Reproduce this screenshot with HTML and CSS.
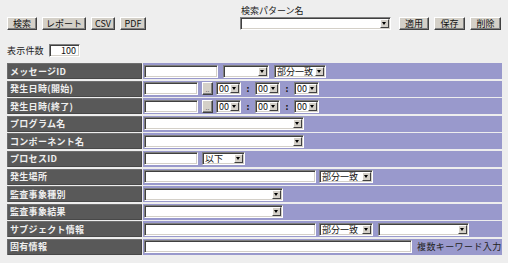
FILE: index.html
```html
<!DOCTYPE html>
<html lang="ja">
<head>
<meta charset="utf-8">
<title>検索</title>
<link rel="stylesheet" href="styles.css">
</head>
<body>
<div class="page">
  <div class="top">
    <div class="top-left">
      <div class="btn-row">
        <span class="btn w30">検索</span>
        <span class="btn w44">レポート</span>
        <span class="btn w24">CSV</span>
        <span class="btn w26">PDF</span>
      </div>
      <div class="count-row">
        <span class="count-label">表示件数</span>
        <span class="inp count-inp">100</span>
      </div>
    </div>
    <div class="top-right">
      <div class="pattern-label">検索パターン名</div>
      <div class="pattern-row">
        <span class="sel w151"><span class="sel-text"></span><span class="arrow"></span></span>
        <div class="right-btns">
          <span class="btn w30">適用</span>
          <span class="btn w31">保存</span>
          <span class="btn w31">削除</span>
        </div>
      </div>
    </div>
  </div>

  <div class="grid">
    <div class="lbl">メッセージID</div>
    <div class="val">
      <span class="inp w74"></span>
      <span class="sel w46 ml5"><span class="sel-text"></span><span class="arrow"></span></span>
      <span class="sel w52 ml5"><span class="sel-text">部分一致</span><span class="arrow"></span></span>
    </div>

    <div class="lbl">発生日時(開始)</div>
    <div class="val">
      <span class="inp w54"></span>
      <span class="btn dots ml4">..</span>
      <span class="sel w25 ml3"><span class="sel-text">00</span><span class="arrow"></span></span>
      <span class="colon">:</span>
      <span class="sel w25"><span class="sel-text">00</span><span class="arrow"></span></span>
      <span class="colon">:</span>
      <span class="sel w25"><span class="sel-text">00</span><span class="arrow"></span></span>
    </div>

    <div class="lbl">発生日時(終了)</div>
    <div class="val">
      <span class="inp w54"></span>
      <span class="btn dots ml4">..</span>
      <span class="sel w25 ml3"><span class="sel-text">00</span><span class="arrow"></span></span>
      <span class="colon">:</span>
      <span class="sel w25"><span class="sel-text">00</span><span class="arrow"></span></span>
      <span class="colon">:</span>
      <span class="sel w25"><span class="sel-text">00</span><span class="arrow"></span></span>
    </div>

    <div class="lbl">プログラム名</div>
    <div class="val">
      <span class="sel w160"><span class="sel-text"></span><span class="arrow"></span></span>
    </div>

    <div class="lbl">コンポーネント名</div>
    <div class="val">
      <span class="sel w160"><span class="sel-text"></span><span class="arrow"></span></span>
    </div>

    <div class="lbl">プロセスID</div>
    <div class="val">
      <span class="inp w54"></span>
      <span class="sel w43 ml4"><span class="sel-text">以下</span><span class="arrow"></span></span>
    </div>

    <div class="lbl">発生場所</div>
    <div class="val">
      <span class="inp w172"></span>
      <span class="sel w54 ml3"><span class="sel-text">部分一致</span><span class="arrow"></span></span>
    </div>

    <div class="lbl">監査事象種別</div>
    <div class="val">
      <span class="sel w139"><span class="sel-text"></span><span class="arrow"></span></span>
    </div>

    <div class="lbl">監査事象結果</div>
    <div class="val">
      <span class="sel w139"><span class="sel-text"></span><span class="arrow"></span></span>
    </div>

    <div class="lbl">サブジェクト情報</div>
    <div class="val">
      <span class="inp w172"></span>
      <span class="sel w54 ml3"><span class="sel-text">部分一致</span><span class="arrow"></span></span>
      <span class="sel w91 ml5"><span class="sel-text"></span><span class="arrow"></span></span>
    </div>

    <div class="lbl">固有情報</div>
    <div class="val">
      <span class="inp w268"></span>
      <span class="hint">複数キーワード入力</span>
    </div>
  </div>
</div>
</body>
</html>
```

FILE: styles.css
```css
* { box-sizing: border-box; }

body {
  margin: 0;
  background: #eeeeee;
  font-family: "Noto Sans CJK JP", "Noto Sans", sans-serif;
  font-size: 9px;
  color: #222;
}

.page {
  padding: 6px 7px 0 7px;
  width: 508px;
}

.top {
  display: flex;
  height: 57px;
}

.top-left {
  width: 234px;
  padding-top: 11px;
}

.btn-row {
  display: flex;
  gap: 5px;
  height: 13px;
}

.count-row {
  display: flex;
  align-items: center;
  margin-top: 14px;
  height: 12px;
}

.count-label {
  width: 42px;
  letter-spacing: 0.2px;
}

.count-inp {
  width: 31px;
  justify-content: flex-end;
  padding-right: 3px;
}

.top-right {
  display: flex;
  flex-direction: column;
}

.pattern-label {
  height: 11px;
  line-height: 10px;
  padding-left: 1px;
}

.pattern-row {
  display: flex;
  align-items: center;
  height: 13px;
}

.right-btns {
  display: flex;
  gap: 5px;
  margin-left: 8px;
}

.btn {
  display: inline-flex;
  align-items: center;
  justify-content: center;
  height: 13px;
  background: #d4d0c8;
  border: 1px solid;
  border-color: #ffffff #404040 #404040 #ffffff;
  box-shadow: inset -1px -1px 0 #808080;
  color: #111;
  font-size: 9px;
  line-height: 1;
}

.w24 { width: 24px; }
.w25 { width: 25px; }
.w26 { width: 26px; }
.w30 { width: 30px; }
.w31 { width: 31px; }
.w43 { width: 43px; }
.w44 { width: 44px; }
.w46 { width: 46px; }
.w52 { width: 52px; }
.w54 { width: 54px; }
.w74 { width: 74px; }
.w91 { width: 91px; }
.w139 { width: 139px; }
.w151 { width: 151px; }
.w160 { width: 160px; }
.w172 { width: 172px; }
.w268 { width: 268px; }

.ml3 { margin-left: 3px; }
.ml4 { margin-left: 4px; }
.ml5 { margin-left: 5px; }

.inp {
  display: inline-flex;
  align-items: center;
  height: 13px;
  background: #ffffff;
  border: 1px solid;
  border-color: #808080 #ffffff #ffffff #808080;
  box-shadow: inset 1px 1px 0 #404040, inset -1px -1px 0 #d4d0c8;
  font-size: 9px;
  line-height: 11px;
  color: #111;
}

.sel {
  display: inline-flex;
  align-items: center;
  height: 13px;
  background: #ffffff;
  border: 1px solid;
  border-color: #808080 #ffffff #ffffff #808080;
  box-shadow: inset 1px 1px 0 #404040, inset -1px -1px 0 #d4d0c8;
}

.sel-text {
  flex: 1;
  padding-left: 2px;
  font-size: 9px;
  line-height: 11px;
  color: #111;
  white-space: nowrap;
}

.arrow {
  position: relative;
  flex: none;
  width: 9px;
  height: 9px;
  margin-right: 1px;
  background: #d4d0c8;
  border: 1px solid;
  border-color: #ffffff #404040 #404040 #ffffff;
}

.arrow::after {
  content: "";
  position: absolute;
  left: 1px;
  top: 2px;
  border-left: 2.5px solid transparent;
  border-right: 2.5px solid transparent;
  border-top: 3px solid #000;
}

.dots {
  width: 11px;
  height: 13px;
  font-size: 7px;
  line-height: 7px;
  align-items: flex-end;
  padding-bottom: 1px;
  color: #666;
}

.colon {
  display: inline-block;
  width: 14px;
  text-align: center;
  font-weight: bold;
  color: #111;
}

.grid {
  display: grid;
  grid-template-columns: 135px 359px;
  grid-auto-rows: 16px;
  column-gap: 1px;
  row-gap: 1.6px;
}

.lbl {
  background: #595959;
  color: #efefef;
  font-weight: bold;
  font-size: 9px;
  display: flex;
  align-items: center;
  padding-left: 3px;
  letter-spacing: 0.3px;
  box-shadow: inset 1px 1px 0 #6e6e6e, inset -1px -1px 0 #484848;
}

.val {
  background: #9999cc;
  display: flex;
  align-items: center;
  padding-left: 1px;
}

.hint {
  margin-left: 5px;
  color: #222;
  letter-spacing: 0.4px;
}
```
